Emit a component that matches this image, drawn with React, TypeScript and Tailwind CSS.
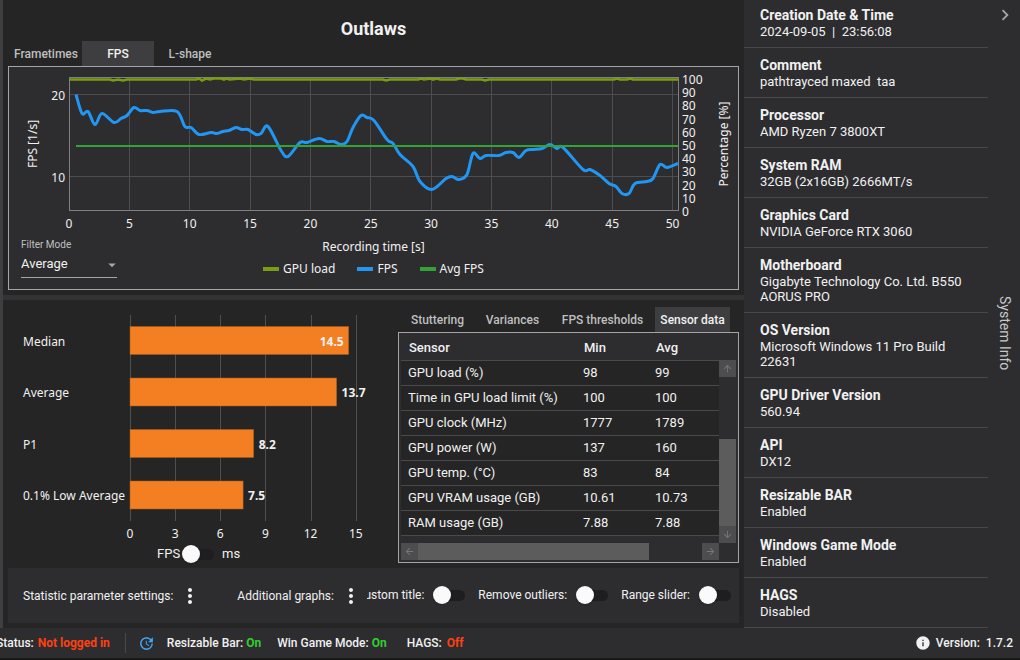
import { useState } from 'react';
import {
  MdArrowBack,
  MdArrowDownward,
  MdArrowDropDown,
  MdArrowForward,
  MdArrowUpward,
  MdChevronRight,
  MdInfo,
  MdMoreVert,
  MdUpdate,
} from 'react-icons/md';

const systemInfo = [
  { label: 'Creation Date & Time', value: '2024-09-05  |  23:56:08' },
  { label: 'Comment', value: 'pathtrayced maxed  taa' },
  { label: 'Processor', value: 'AMD Ryzen 7 3800XT' },
  { label: 'System RAM', value: '32GB (2x16GB) 2666MT/s' },
  { label: 'Graphics Card', value: 'NVIDIA GeForce RTX 3060' },
  { label: 'Motherboard', value: 'Gigabyte Technology Co. Ltd. B550 AORUS PRO' },
  { label: 'OS Version', value: 'Microsoft Windows 11 Pro Build 22631' },
  { label: 'GPU Driver Version', value: '560.94' },
  { label: 'API', value: 'DX12' },
  { label: 'Resizable BAR', value: 'Enabled' },
  { label: 'Windows Game Mode', value: 'Enabled' },
  { label: 'HAGS', value: 'Disabled' },
];

const sensors = [
  { name: 'GPU load (%)', min: '98', avg: '99' },
  { name: 'Time in GPU load limit (%)', min: '100', avg: '100' },
  { name: 'GPU clock (MHz)', min: '1777', avg: '1789' },
  { name: 'GPU power (W)', min: '137', avg: '160' },
  { name: 'GPU temp. (°C)', min: '83', avg: '84' },
  { name: 'GPU VRAM usage (GB)', min: '10.61', avg: '10.73' },
  { name: 'RAM usage (GB)', min: '7.88', avg: '7.88' },
];

const metrics = [
  { name: 'Median', value: 14.5, inside: true },
  { name: 'Average', value: 13.7, inside: false },
  { name: 'P1', value: 8.2, inside: false },
  { name: '0.1% Low Average', value: 7.5, inside: false },
];

const legend = [
  { name: 'GPU load', swatch: 'bg-[#7a9d13]' },
  { name: 'FPS', swatch: 'bg-[#2196f3]' },
  { name: 'Avg FPS', swatch: 'bg-[#32a432]' },
];

const fpsPoints: [number, number][] = [
  [67, 27], [73, 46], [79, 44], [86, 57], [93, 46], [105, 55], [112, 51], [118, 48], [125, 40], [131, 43],
  [138, 43], [144, 45], [151, 44], [168, 44], [176, 59], [182, 60], [190, 67], [202, 65], [208, 66], [214, 64],
  [220, 63], [227, 60], [233, 62], [239, 62], [247, 67], [252, 66], [259, 59], [272, 83], [279, 89], [291, 75],
  [298, 75], [310, 71], [318, 74], [325, 74], [332, 77], [338, 74], [344, 60], [352, 48], [358, 50], [365, 53],
  [378, 72], [384, 76], [391, 87], [404, 99], [411, 114], [423, 122], [437, 111], [443, 109], [450, 112], [458, 107],
  [464, 86], [471, 91], [477, 88], [490, 88], [497, 85], [504, 85], [510, 90], [517, 83], [524, 82], [533, 81],
  [541, 77], [548, 81], [554, 80], [574, 102], [581, 102], [591, 108], [600, 116], [607, 119], [613, 126], [620, 126],
  [626, 116], [638, 114], [644, 111], [651, 97], [658, 100], [669, 96],
];

const gpuPoints: [number, number][] = [
  [61, 12], [101, 12], [104, 13], [109, 12], [114, 13], [118, 12], [187, 12], [190, 11], [193, 13], [197, 11], [201, 12],
  [205, 11], [212, 11], [215, 12], [217, 11], [221, 12], [231, 11], [235, 12], [241, 11], [245, 12], [374, 12],
  [377, 13], [381, 12], [409, 12], [412, 11], [415, 12], [422, 11], [424, 12], [428, 11], [431, 12], [447, 12],
  [450, 11], [454, 11], [457, 12], [473, 12], [476, 13], [480, 12], [605, 12], [608, 11], [611, 12], [618, 12],
  [621, 11], [624, 12], [669, 12],
];

const toLine = (points: [number, number][]) => 'M' + points.map((p) => p.join(',')).join('L');

// Catmull-Rom spline as cubic bezier segments
function toSpline(points: [number, number][]) {
  let d = `M${points[0].join(',')}`;
  for (let i = 0; i < points.length - 1; i++) {
    const p0 = points[i - 1] ?? points[i];
    const [x1, y1] = points[i];
    const [x2, y2] = points[i + 1];
    const p3 = points[i + 2] ?? points[i + 1];
    d += `C${x1 + (x2 - p0[0]) / 6},${y1 + (y2 - p0[1]) / 6} ${x2 - (p3[0] - x1) / 6},${y2 - (p3[1] - y1) / 6} ${x2},${y2}`;
  }
  return d;
}

function Switch({ id }: { id: string }) {
  return (
    <input
      id={id}
      type="checkbox"
      role="switch"
      className="relative h-[18px] w-8 shrink-0 appearance-none before:absolute before:inset-x-0 before:top-1 before:h-[11px] before:rounded-full before:bg-[#1e1e20] after:absolute after:top-0 after:left-0 after:size-[18px] after:rounded-full after:bg-[#fafafa] after:shadow-sm checked:before:bg-[#2196f3] checked:after:left-[14px]"
    />
  );
}

function FpsChart() {
  const xTicks = Array.from({ length: 11 }, (_, i) => i * 5);
  const percentTicks = Array.from({ length: 11 }, (_, i) => i * 10);

  return (
    <svg viewBox="0 0 729 169" className="block h-auto w-full font-['Noto_Sans',sans-serif] text-[12px]" fill="#f1f1f1" role="img" aria-label="FPS over recording time">
      <g stroke="#4d4d50" shapeRendering="crispEdges">
        {xTicks.slice(1).map((t) => (
          <line key={t} x1={60.3 + t * 12.06} x2={60.3 + t * 12.06} y1="11" y2="144" />
        ))}
        <line x1="61" x2="669" y1="27.5" y2="27.5" />
        <line x1="61" x2="669" y1="109.5" y2="109.5" />
      </g>
      <rect x="60.5" y="10.5" width="609" height="133" fill="none" stroke="#808083" />
      <path d={toLine(gpuPoints)} transform="translate(0 0.5)" fill="none" stroke="#7a9d13" strokeWidth="2.6" />
      <path d={toSpline(fpsPoints)} transform="translate(0 0.5)" fill="none" stroke="#2196f3" strokeWidth="3" strokeLinejoin="round" />
      <line x1="67" x2="669" y1="79" y2="79" stroke="#32a432" strokeWidth="2" />

      {xTicks.map((t) => (
        <text key={t} x={60 + t * 12.07} y="161" textAnchor="middle">{t}</text>
      ))}
      <text x="56" y="33" textAnchor="end">20</text>
      <text x="56" y="115" textAnchor="end">10</text>
      {percentTicks.map((t) => (
        <text key={t} x="673" y={149 - t * 1.32}>{t}</text>
      ))}
      <text transform="translate(28 77) rotate(-90)" textAnchor="middle">FPS [1/s]</text>
      <text transform="translate(719 77) rotate(-90)" textAnchor="middle">Percentage [%]</text>
    </svg>
  );
}

function MetricChart() {
  const ticks = [0, 3, 6, 9, 12, 15];

  return (
    <svg viewBox="0 0 390 245" className="block h-auto w-full font-['Noto_Sans',sans-serif] text-[12px]" fill="#f1f1f1" role="img" aria-label="FPS metrics">
      {ticks.map((t) => (
        <g key={t}>
          <line x1={122.5 + t * 15.05} x2={122.5 + t * 15.05} y1="15" y2="221" stroke="#4f4f51" shapeRendering="crispEdges" />
          <text x={122 + t * 15.05} y="238" textAnchor="middle">{t}</text>
        </g>
      ))}
      {metrics.map((m, i) => {
        const top = 26.5 + i * 51.5;
        const end = 122 + m.value * 15.08;
        return (
          <g key={m.name}>
            <text x="15" y={top + 19}>{m.name}</text>
            <rect x="122" y={top} width={m.value * 15.08} height="28" fill="#f47f22" stroke="#a85c20" strokeWidth="0.5" />
            <text x={m.inside ? end - 5 : end + 5} y={top + 19} textAnchor={m.inside ? 'end' : 'start'} className="font-bold">
              {m.value}
            </text>
          </g>
        );
      })}
    </svg>
  );
}

function Tabs({ items, initial, className }: { items: string[]; initial: string; className: string }) {
  const [active, setActive] = useState(initial);
  return (
    <div role="tablist" className={className}>
      {items.map((item) => (
        <button
          key={item}
          role="tab"
          aria-selected={item === active}
          onClick={() => setActive(item)}
          className="h-[25px] text-[12px] font-medium whitespace-nowrap text-[#bfbfbf] aria-selected:bg-[#3e3e40] aria-selected:text-[#f1f1f1]"
        >
          {item}
        </button>
      ))}
    </div>
  );
}

function SensorTable() {
  return (
    <div className="grid h-[231px] grid-cols-[1fr_17px] grid-rows-[1fr_17px] border border-[#a5a5a7] bg-[#2d2d30] p-[2px]">
      <table className="w-full table-fixed self-start text-left">
        <thead>
          <tr className="h-[25px] border-b border-[#4a4a4c]">
            <th className="w-[175px] pl-2 font-medium">Sensor</th>
            <th className="w-[72px] pl-2 font-medium">Min</th>
            <th className="pl-2 font-medium">Avg</th>
          </tr>
        </thead>
        <tbody className="bg-[#252525]">
          {sensors.map((s) => (
            <tr key={s.name} className="h-[25px] border-b border-[#4a4a4c]">
              <td className="pl-[7px] whitespace-nowrap">{s.name}</td>
              <td className="pl-[7px]">{s.min}</td>
              <td className="pl-[7px]">{s.avg}</td>
            </tr>
          ))}
        </tbody>
      </table>

      <div className="flex flex-col pt-[25px] text-[#777]">
        <button aria-label="Scroll up" className="flex h-[17px] items-center justify-center bg-[#4d4d4f]"><MdArrowUpward size={11} /></button>
        <div className="flex-1" />
        <div className="h-[87px] bg-[#5c5c5c]" />
        <button aria-label="Scroll down" className="flex h-[17px] items-center justify-center bg-[#4d4d4f]"><MdArrowDownward size={11} /></button>
      </div>

      <div className="flex text-[#777]">
        <button aria-label="Scroll left" className="flex w-[17px] items-center justify-center bg-[#4d4d4f]"><MdArrowBack size={11} /></button>
        <div className="w-[231px] bg-[#5c5c5c]" />
        <div className="flex-1" />
        <button aria-label="Scroll right" className="flex w-[17px] items-center justify-center bg-[#4d4d4f]"><MdArrowForward size={11} /></button>
      </div>
    </div>
  );
}

export default function App() {
  return (
    <div className="flex min-h-screen flex-col overflow-hidden bg-[#2d2d30] font-[Roboto,sans-serif] text-[13px] text-[#f1f1f1]">
      <div className="flex flex-1">
        <main className="flex min-w-0 flex-1 flex-col border-l-[3px] border-[#3f3f42] bg-[#252525]">
          {/* Frametime / FPS graph */}
          <section className="px-[5px] pb-[5px]">
            <h1 className="pt-4 text-center text-lg leading-[25px] font-bold">Outlaws</h1>
            <Tabs items={['Frametimes', 'FPS', 'L-shape']} initial="FPS" className="grid w-[218px] grid-cols-3 pl-[2px]" />
            <div className="border border-[#a5a5a7] bg-[#2d2d30]">
              <FpsChart />
              <div className="grid grid-cols-[1fr_auto_1fr] pb-[10px]">
                <div className="ml-3 w-24 pt-[3px]">
                  <label htmlFor="filter-mode" className="block text-[10px] leading-3 text-[#c0c0c0]">Filter Mode</label>
                  <div className="relative">
                    <select id="filter-mode" className="block h-[27px] w-full appearance-none border-b border-[#a5a5a7] bg-transparent pb-px">
                      <option>Average</option>
                      <option>Raw</option>
                      <option>Raw + Average</option>
                    </select>
                    <MdArrowDropDown size={18} className="pointer-events-none absolute top-[5px] -right-1 text-[#a5a5a7]" />
                  </div>
                </div>
                <div className="pt-px font-['Noto_Sans',sans-serif] text-[12px]">
                  <div className="text-center leading-5">Recording time [s]</div>
                  <ul className="mt-[2px] flex gap-[22px] leading-5">
                    {legend.map((l) => (
                      <li key={l.name} className="flex items-center gap-1">
                        <span className={`h-1 w-4 ${l.swatch}`} />
                        {l.name}
                      </li>
                    ))}
                  </ul>
                </div>
              </div>
            </div>
          </section>

          <div className="h-[5px] bg-[#333334]" />

          {/* Metrics and sensors */}
          <section className="grid grid-cols-[390fr_341fr] px-[5px]">
            <div>
              <MetricChart />
              <div className="flex h-[17px] items-center gap-[2px] pl-[149px]">
                <label htmlFor="unit">FPS</label>
                <Switch id="unit" />
                <label htmlFor="unit" className="pl-[6px]">ms</label>
              </div>
            </div>
            <div className="pt-[7px]">
              <Tabs
                items={['Stuttering', 'Variances', 'FPS thresholds', 'Sensor data']}
                initial="Sensor data"
                className="grid grid-cols-[75px_75px_105px_75px] justify-start pl-[2px]"
              />
              <SensorTable />
            </div>
          </section>

          {/* Toolbar */}
          <section className="m-[5px] flex h-[55px] items-center bg-[#2d2d30] pr-2 pl-[15px] text-[12px] whitespace-nowrap">
            <span>Statistic parameter settings:</span>
            <button aria-label="Statistic parameter settings" className="ml-[5px] flex w-6 justify-center"><MdMoreVert size={24} /></button>
            <span className="ml-[35px]">Additional graphs:</span>
            <button aria-label="Additional graphs" className="ml-[5px] flex w-6 justify-center"><MdMoreVert size={24} /></button>
            <div className="ml-1 flex min-w-0 flex-1 items-center justify-end gap-[9px] overflow-hidden pb-[2px]">
              <label htmlFor="custom-title">Custom title:</label>
              <Switch id="custom-title" />
              <label htmlFor="outliers" className="pl-1">Remove outliers:</label>
              <Switch id="outliers" />
              <label htmlFor="range" className="pl-1">Range slider:</label>
              <Switch id="range" />
            </div>
          </section>
        </main>

        {/* System info */}
        <aside className="flex w-[276px] shrink-0">
          <dl className="w-[244px]">
            {systemInfo.map((info) => (
              <div key={info.label} className="border-b border-[#48484b] py-2 pr-4 pl-4 first:pt-[6px]">
                <dt className="text-sm leading-[18px] font-bold">{info.label}</dt>
                <dd className="leading-[15px] whitespace-pre-wrap">{info.value}</dd>
              </div>
            ))}
          </dl>
          <div className="flex flex-1 flex-col items-center pt-1 pl-[2px] text-[#a5a5a7]">
            <button aria-label="Collapse system info"><MdChevronRight size={22} /></button>
            <div className="flex flex-1 items-center pt-3">
              <span className="text-sm text-[#c8c8c8] [writing-mode:vertical-rl]">System Info</span>
            </div>
          </div>
        </aside>
      </div>

      <footer className="flex h-8 items-center overflow-hidden border-b-2 border-[#19191a] pr-[7px] text-[12px] font-medium whitespace-nowrap">
        <span className="-ml-1">Status:</span>
        <span className="ml-[4px] font-bold text-[#ff4010]">Not logged in</span>
        <span className="ml-[15px] h-5 w-px bg-[#48484b]" />
        <button aria-label="Refresh status" className="ml-3 text-[#42a5f5]"><MdUpdate size={17} /></button>
        <span className="ml-3">Resizable Bar: <span className="font-bold text-[#32cd32]">On</span></span>
        <span className="ml-4">Win Game Mode: <span className="font-bold text-[#32cd32]">On</span></span>
        <span className="ml-5">HAGS: <span className="ml-[2px] font-bold text-[#ff4010]">Off</span></span>
        <span className="ml-auto flex items-center gap-[5px] whitespace-pre"><MdInfo size={16} />Version:  1.7.2</span>
      </footer>
    </div>
  );
}
